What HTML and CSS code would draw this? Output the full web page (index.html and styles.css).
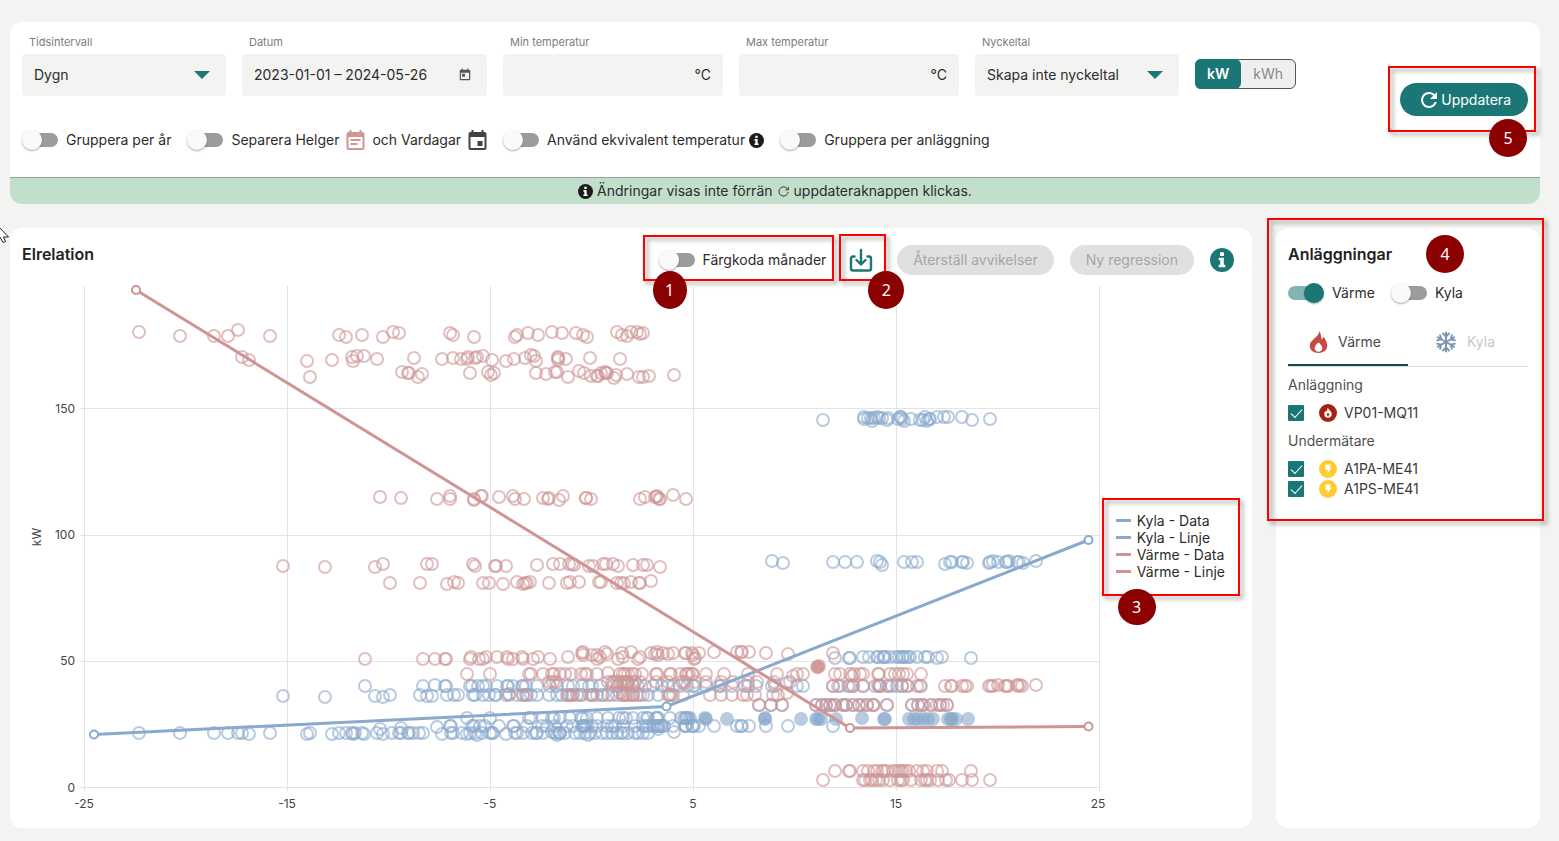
FILE: index.html
```html
<!DOCTYPE html>
<html lang="sv">
<head>
<meta charset="utf-8">
<title>Elrelation</title>
<link rel="stylesheet" href="styles.css">
</head>
<body>
<svg class="sprite" aria-hidden="true">
  <symbol id="i-info" viewBox="0 0 16 16"><circle cx="8" cy="8" r="8" fill="currentColor"/><path fill="#fff" d="M6.7 2.8h2.6v2.5H6.7zM5.8 6.5h3.4v4.6h1v1.7H5.8v-1.7h1V8.200h-1z"/></symbol>
  <symbol id="i-caret" viewBox="0 0 16 8"><path fill="currentColor" d="M0 0h16L8 8z"/></symbol>
  <symbol id="i-refresh" viewBox="0 0 24 24"><path fill="currentColor" d="M17.650 6.350A7.960 7.960 0 0 0 12 4a8 8 0 1 0 7.730 10h-2.080A6 6 0 1 1 12 6c1.660 0 3.140.690 4.220 1.780L13 11h7V4z"/></symbol>
  <symbol id="i-bolt" viewBox="0 0 18 18"><circle cx="9" cy="9" r="9" fill="#ffcb32"/><path fill="#fff" d="M6.500 4.500h5.200L10.700 7.600h1.900L8.400 13.800l.5-3.900H6.500z"/></symbol>
</svg>

<section class="panel filters">
  <div class="filters-body">
    <div class="filters-form">
      <div class="row fields">
        <div class="field w-select">
          <label for="interval">Tidsintervall</label>
          <div class="control"><select id="interval"><option>Dygn</option></select><svg class="caret"><use href="#i-caret"/></svg></div>
        </div>
        <div class="field w-date">
          <label for="date">Datum</label>
          <div class="control"><input id="date" type="text" value="2023-01-01 – 2024-05-26">
            <svg class="cal" viewBox="0 0 24 24"><path fill="currentColor" d="M19 3h-1V1h-2v2H8V1H6v2H5a2 2 0 0 0-2 2v14a2 2 0 0 0 2 2h14a2 2 0 0 0 2-2V5a2 2 0 0 0-2-2zm0 16H5V8h14zM7 10h5v5H7z"/></svg></div>
        </div>
        <div class="field w-temp">
          <label for="tmin">Min temperatur</label>
          <div class="control"><input id="tmin" type="text"><span class="unit">°C</span></div>
        </div>
        <div class="field w-temp">
          <label for="tmax">Max temperatur</label>
          <div class="control"><input id="tmax" type="text"><span class="unit">°C</span></div>
        </div>
        <div class="field w-select">
          <label for="key">Nyckeltal</label>
          <div class="control"><select id="key"><option>Skapa inte nyckeltal</option></select><svg class="caret"><use href="#i-caret"/></svg></div>
        </div>
        <div class="units"><button class="on" type="button">kW</button><button type="button">kWh</button></div>
      </div>
      <div class="row switches">
        <label class="switch"><input type="checkbox">Gruppera per år</label>
        <label class="switch"><input type="checkbox"><span class="inline">Separera Helger
          <svg class="day holiday" viewBox="3 1 18 20"><path fill="currentColor" d="M19 3h-1V1h-2v2H8V1H6v2H5a2 2 0 0 0-2 2v14a2 2 0 0 0 2 2h14a2 2 0 0 0 2-2V5a2 2 0 0 0-2-2zm0 16H5V8h14zM7 10h10v2H7zM7 14h7v2H7z"/></svg>
          och Vardagar
          <svg class="day" viewBox="3 1 18 20"><path fill="currentColor" d="M19 3h-1V1h-2v2H8V1H6v2H5a2 2 0 0 0-2 2v14a2 2 0 0 0 2 2h14a2 2 0 0 0 2-2V5a2 2 0 0 0-2-2zm0 16H5V8h14zM12 12h5v5h-5z"/></svg></span></label>
        <label class="switch"><input type="checkbox"><span class="inline tight">Använd ekvivalent temperatur <svg class="info"><use href="#i-info"/></svg></span></label>
        <label class="switch"><input type="checkbox">Gruppera per anläggning</label>
      </div>
    </div>
    <div class="marked mark-update">
      <button class="update" type="button"><svg><use href="#i-refresh"/></svg>Uppdatera</button>
      <span class="frame"></span><span class="badge">5</span>
    </div>
  </div>
  <div class="notice">
    <svg class="info"><use href="#i-info"/></svg><span>Ändringar visas inte förrän</span>
    <svg class="mini" viewBox="0 0 14 14" fill="none" stroke="currentColor"><path d="M12 7.500A5 5 0 1 1 10.800 3.700L12 5M12.200 2v3.200H9"/></svg><span>uppdateraknappen klickas.</span>
  </div>
</section>

<main class="columns">
  <section class="panel chart-card">
    <header class="chart-head">
      <h1>Elrelation</h1>
      <div class="tools">
        <div class="marked mark-months"><label class="switch"><input type="checkbox">Färgkoda månader</label><span class="frame"></span><span class="badge">1</span></div>
        <div class="marked mark-save">
          <button class="icon-btn" type="button" aria-label="Ladda ner"><svg viewBox="0 0 24 24" fill="none" stroke="currentColor" stroke-width="2.400" stroke-linecap="round" stroke-linejoin="round"><path d="M5.500 8.500H4a2 2 0 0 0-2 2V20.500a2 2 0 0 0 2 2h16a2 2 0 0 0 2-2V10.500a2 2 0 0 0-2-2h-1.500M12 2v14M7.500 12l4.500 4.500 4.500-4.500"/></svg></button>
          <span class="frame"></span><span class="badge">2</span>
        </div>
        <button class="pill" type="button" disabled>Återställ avvikelser</button>
        <button class="pill" type="button" disabled>Ny regression</button>
        <button class="icon-btn help" type="button" aria-label="Information"><svg><use href="#i-info"/></svg></button>
      </div>
    </header>
    <div class="chart">
      <svg id="plot" viewBox="10 286 1242 542" role="img" aria-label="Elrelation, kW">
        <path class="grid" d="M84.500 286v505M287.500 286v505M490.500 286v505M693.500 286v505M896.500 286v505M1099.500 286v505M80 408.500h1020M80 535.500h1020M80 661.500h1020M80 787.500h1020"/>
        <g class="axis end"><text x="75" y="413">150</text><text x="75" y="539">100</text><text x="75" y="665">50</text><text x="75" y="792">0</text></g>
        <g class="axis mid"><text x="84" y="808">-25</text><text x="287" y="808">-15</text><text x="490" y="808">-5</text><text x="693" y="808">5</text><text x="896" y="808">15</text><text x="1098" y="808">25</text><text transform="translate(41 537) rotate(-90)">kW</text></g>
        <g id="dots"></g>
        <g class="trend cool"><path d="M94 734.500 666.500 706.500 1088.500 540"/><circle cx="94" cy="734.500" r="4"/><circle cx="666.500" cy="706.500" r="4"/><circle cx="1088.500" cy="540" r="4"/></g>
        <g class="trend heat"><path d="M136 290 850 728 1088.500 726.500"/><circle cx="136" cy="290" r="4"/><circle cx="850" cy="728" r="4"/><circle cx="1088.500" cy="726.500" r="4"/></g>
      </svg>
      <div class="marked mark-legend">
        <ul class="legend"><li class="cool">Kyla - Data</li><li class="cool">Kyla - Linje</li><li class="heat">Värme - Data</li><li class="heat">Värme - Linje</li></ul>
        <span class="frame"></span><span class="badge">3</span>
      </div>
    </div>
  </section>

  <aside class="panel side marked mark-side">
    <h2>Anläggningar</h2>
    <div class="side-switches">
      <label class="switch"><input type="checkbox" checked>Värme</label>
      <label class="switch"><input type="checkbox">Kyla</label>
    </div>
    <div class="tabs">
      <button class="tab active" type="button"><svg class="flame" viewBox="0 0 20 24"><path fill="#c64a3f" d="M10.500.500c.3 1.600-.3 3-1.600 4.700C6 8.500.800 11.500.800 16.200c0 4.300 3.900 7.300 9.100 7.300s9.300-3 9.300-7.300c0-4.300-2.200-7-3.700-9.700-.5 1.200-1.300 2-2.400 2.300C12.600 6 12.700 3 10.500.500z"/><path fill="#fff" d="M10 12.500c2.300 1.600 4 3.900 4 6 0 2.300-1.700 3.700-4 3.700s-4-1.400-4-3.700c0-2.100 1.700-4.400 4-6z"/></svg>Värme</button>
      <button class="tab" type="button"><svg class="snow" viewBox="0 0 22 22" fill="none" stroke="#7d96b8" stroke-width="2" stroke-linecap="round"><g id="arm"><path d="M11 11V1.500M8 2.500l3 3 3-3"/></g><use href="#arm" transform="rotate(60 11 11)"/><use href="#arm" transform="rotate(120 11 11)"/><use href="#arm" transform="rotate(180 11 11)"/><use href="#arm" transform="rotate(240 11 11)"/><use href="#arm" transform="rotate(300 11 11)"/></svg>Kyla</button>
    </div>
    <h3>Anläggning</h3>
    <label class="meter"><input type="checkbox" checked><svg viewBox="0 0 18 18"><circle cx="9" cy="9" r="9" fill="#a82015"/><path fill="#fff" d="M9 3.800c.3 2 3.700 3.400 3.700 6.200a3.600 3.600 0 0 1-7.400 0c0-1.500 1-2.500 1.700-3.200.3.500.5.800.9.900C7.900 6.300 8 5 9 3.800z"/><circle cx="9" cy="10.600" r="1.300" fill="#a82015"/></svg>VP01-MQ11</label>
    <h3>Undermätare</h3>
    <label class="meter"><input type="checkbox" checked><svg><use href="#i-bolt"/></svg>A1PA-ME41</label>
    <label class="meter"><input type="checkbox" checked><svg><use href="#i-bolt"/></svg>A1PS-ME41</label>
    <span class="frame"></span><span class="badge">4</span>
  </aside>
</main>
<svg class="pointer" viewBox="0 0 10 18" aria-hidden="true"><path fill="#fff" stroke="#222" d="M-3-1V14l3-3 3 5.500 2.500-1L3.500 11H8.500z"/></svg>
<script src="chart.js"></script>
</body>
</html>
```
FILE: styles.css
```css
* { box-sizing: border-box; }
body {
  margin: 0;
  padding: 22px 19px 13px 10px;
  background: #f3f3f1;
  color: #2c2c2c;
  font: 400 14px/20px Inter, "Liberation Sans", sans-serif;
}
button, input, select { font: inherit; color: inherit; margin: 0; }
button { cursor: pointer; }
h1, h2, h3 { margin: 0; }
.sprite { position: absolute; width: 0; height: 0; }
.panel { background: #fff; border-radius: 12px; }

/* filter panel */
.filters-body { display: flex; justify-content: space-between; align-items: center; min-height: 155px; padding: 12px; }
.filters-form { align-self: flex-start; display: flex; flex-direction: column; gap: 34px; }
.row { display: flex; gap: 16px; }
.fields { align-items: flex-end; }
.field { display: flex; flex-direction: column; gap: 3px; }
.field label { padding-left: 7px; font-size: 11px; line-height: 17px; color: #7c7c7c; }
.w-select { width: 204px; }
.w-date { width: 245px; }
.w-temp { width: 220px; }
.control { display: flex; align-items: center; height: 42px; padding: 0 12px; background: #f3f3f1; border-radius: 4px; }
.control select, .control input { flex: 1; min-width: 0; padding: 0; border: 0; background: none; appearance: none; outline: 0; }
.caret { width: 16px; height: 8px; margin-right: 4px; color: #1b7776; }
.cal { width: 14px; height: 14px; margin-right: 3px; color: #555; }
.units { display: flex; height: 30px; margin-bottom: 7px; border: 1px solid #555; border-radius: 6px; background: #efefef; }
.units button { padding: 0 12px; border: 0; background: none; color: #888; }
.units .on { margin: -1px 0 -1px -1px; border-radius: 6px; background: #1b7776; color: #fff; font-weight: 600; }

/* switches */
.switch { display: inline-flex; align-items: center; gap: 8px; white-space: nowrap; }
.switch input { position: relative; flex: none; appearance: none; width: 36px; height: 20px; }
.switch input::before { content: ""; position: absolute; inset: 3px 0 3px 2px; border-radius: 7px; background: #9c9c9c; }
.switch input::after { content: ""; position: absolute; left: 0; top: 0; width: 20px; height: 20px; border-radius: 50%; background: #fafafa; box-shadow: 0 1px 2px rgba(0, 0, 0, .35); }
.switch input:checked::before { background: #83b3b3; inset: 3px 2px 3px 0; }
.switch input:checked::after { left: auto; right: 0; background: #1b7776; }
.inline { display: inline-flex; align-items: center; gap: 7px; }
.inline.tight { gap: 4px; }
.info { width: 15px; height: 15px; flex: none; color: #1c1c1c; }
.day { width: 19px; height: 20px; color: #424242; }
.day.holiday { color: #d09696; }

.update { display: flex; align-items: center; height: 33px; padding: 0 17px; border: 0; border-radius: 17px; background: #1b7776; color: #fff; }
.update svg { width: 24px; height: 24px; }
.notice { display: flex; justify-content: center; align-items: center; gap: 4px; height: 27px; border-top: 1px solid #93a29a; border-radius: 0 0 12px 12px; background: #c1dfcb; }
.mini { width: 13px; height: 13px; }

/* chart card */
.columns { display: flex; gap: 24px; margin-top: 24px; }
.chart-card { flex: 1; min-width: 0; }
.chart-head { display: flex; justify-content: space-between; height: 58px; padding: 16px 18px 0 12px; }
h1, h2 { font-size: 16px; line-height: 20px; font-weight: 600; color: #212121; }
.tools { display: flex; align-items: center; gap: 16px; height: 32px; }
.mark-months { display: flex; }
.mark-save { margin: 0 8px 0 7px; }
.icon-btn { display: block; width: 24px; height: 24px; padding: 0; border: 0; background: none; color: #1b7776; }
.icon-btn svg { display: block; width: 24px; height: 24px; }
.pill { height: 30px; padding: 0 16px; border: 0; border-radius: 15px; background: #e0e0e0; color: #a6a6a6; white-space: nowrap; }
.chart { position: relative; }
.chart > svg { display: block; width: 100%; overflow: visible; border-radius: 12px; }
.grid { fill: none; stroke: #e4e4e4; }
.axis { font-size: 12px; fill: #444; }
.end { text-anchor: end; }
.mid { text-anchor: middle; }
.cool { --tone: #89a9cd; }
.heat { --tone: #cf9494; }
.dot { fill: none; stroke: var(--tone); stroke-width: 2; opacity: .6; }
.dot.solid { fill: var(--tone); }
.trend { fill: #fff; stroke: var(--tone); stroke-width: 2; }
.trend path { fill: none; stroke-width: 3; }
.legend { margin: 0; padding: 0; list-style: none; line-height: 17px; }
.legend li { display: flex; align-items: center; gap: 6px; white-space: nowrap; }
.legend li::before { content: ""; width: 15px; height: 3px; background: var(--tone); }

/* side panel */
.side { width: 264px; padding: 16px 12px; }
.side-switches { display: flex; gap: 16px; margin-top: 19px; }
.tabs { display: flex; height: 49px; margin: 15px 0 8px; border-bottom: 1px solid #ddd; }
.tab { flex: 1; display: flex; align-items: center; justify-content: center; gap: 10px; padding: 0 6px 0 0; border: 0; background: none; color: #c8c8c8; }
.tab.active { box-shadow: inset 0 -2px #154a4b; color: #4a4a4a; }
.flame { width: 19px; height: 24px; }
.snow { width: 22px; height: 22px; }
h3 { font-size: 14px; line-height: 20px; font-weight: 400; color: #505050; }
.meter { display: flex; align-items: center; height: 20px; color: #3a3a3a; }
h3 + .meter { margin-top: 8px; }
.meter + h3 { margin-top: 8px; }
.meter svg { width: 18px; height: 18px; margin: 0 7px 0 15px; }
.meter input { appearance: none; width: 16px; height: 16px; border-radius: 1px; background: #1b7776; display: grid; place-items: center; }
.meter input::before { content: ""; width: 10px; height: 5px; margin-bottom: 3px; border: solid #fff; border-width: 0 0 1px 1px; rotate: -48deg; }

/* numbered callouts */
.marked { position: relative; }
.frame { position: absolute; border: 2px solid #f00; filter: drop-shadow(3px 3px 2px rgba(0, 0, 0, .4)); pointer-events: none; }
.badge { position: absolute; z-index: 1; display: grid; place-items: center; width: 38px; height: 38px; border-radius: 50%; background: #8b0000; color: #fff; font: 16px/20px "Noto Sans", sans-serif; }
.mark-update .frame { inset: -17px -8px -16px -12px; }
.mark-update .badge { right: 1px; top: 36px; }
.mark-months .frame { inset: -15px -8px -11px -16px; }
.mark-months .badge { left: -6px; top: 21px; width: 34px; }
.mark-save .frame { inset: -14px -13px -9px -10px; }
.mark-save .badge { left: 19px; top: 23px; width: 36px; }
.mark-legend { position: absolute; right: 12px; top: 212px; padding: 14px 15px 16px 14px; }
.mark-legend .frame { inset: 0; }
.mark-legend .badge { left: 16px; bottom: -29px; height: 36px; }
.mark-side .frame { inset: -10px -4px auto -9px; height: 303px; }
.mark-side .badge { left: 150px; top: 7px; }
.pointer { position: absolute; left: 0; top: 226px; width: 10px; height: 18px; }
```
FILE: chart.js
```javascript
// Measurements in plot units. Each row is "y: x x x …"; an x may carry its own y as x,y.
const series = [
  { tone: 'cool', rows: [
    '418: 823,420 864,417 864,419 868 871 872,421 874 877,417 879 882 887,420 888 898,419 900,417 901,417 902,419 904,421 911,419 920,420 923,420 925,417 927,421 929,419 930,419 937,417 944,417 948,417 962,417 972,420 990,419',
    '562: 772,561 783,563 833 845 857 877,561 880 882,565 904 912 917 945,564 950 952 962 963 967,563 989,563 990 993,561 998 1006 1007 1009,561 1017 1019 1023,563 1036,561',
    '657: 835,658 849,658 850,658 863 869 877 878 883 884 885 890 896 899 902 903 905 908 910 917 925 928 937,658 942 971,658',
    '686: 365 423 435,685 445 446 470 472 478 483 486 497 507 508 513 522 523 526 537 550 557 568 573 582 589 592 600 613 618 627 633 638 645 653 662 668 673 680 687 693 695 706 719 721 732 745 748 756 772 775 787,683 797 803 833 840 848 853 863 875 880 887 892 897 902 907 921',
    '695: 283,696 325,697 375,696 383,697 390 420 427,696 432,696 447 454 458 473 475 483 489 495 496 506 509 517 523 527 531 537 549 557 562 568 572 577 582 592 597 603 608 617 623 633 640 648 658 670',
    '705: 759 771 782 816 822 826 830 835 843 846 853 859 867 873 887 912 918 922 931 940 947',
    '718: 467 490 529 531 543 552 554 560 570 581 583 587 597 608 619 623 626 633 643 647 648 656 657 658 670 681 684 686 688 686',
    '726: 380,729 401,728 437,727 450 451 472 474 480 485 499 513 514 527 542 547 555 567 573 582 583 584 585 587 592 597 607 612 615 623 635 643 646 649 653 655 657 658 659 661 662 664 673 685 686 686 693 692 694 699 714 737 741 742 749 766 788 833',
    '733: 139 180 214 228 238 242 249,734 270 307,734 310 332,734 339 346 352 353,734 355 362 364,734 377 383,734 392 399 401 408 409 413 419 423 442,734 451 453 462 467,734 470 475 477,735 482 490 492 493 506,734 515 517 523 532 536 537 543 552,732 555 557,735 559 560 560 565 575 580 585 588,735 590 595 602 607 612 617 621 623 628 635 638 643 648 658,729 674,732'
  ], solid: '719: 690,718 705,718 706 727 765,718 765 801 816 818 821 836 862,718 884 885 909 914 918 923 928 933 948 951 952 956 968' },
  { tone: 'heat', rows: [
    '335: 139,332 180,336 214,336 228,336 238,330 270,336 339 346,337 362 383,337 393,332 399,333 450,333 453 474,337 515,337 517 528,333 538 552,332 562,333 576,333 583 587,337 617,332 622 627,336 631,332 637,332 640,334 643,333',
    '358: 242,357 249,360 307,361 332,360 352,357 357,356 353,361 364,356 377,359 414 442,359 453 461,359 467,359 468,357 475 477,357 483,356 492,360 506,361 514,359 525 531,355 534,356 536,361 558,357 558,360 558 566,359 590 620,359',
    '373: 310,377 402,372 408 409 418,377 422,374 470 488,372 491,375 494 536 546,374 555,372 557,372 568,377 579,371 584 591,376 597,376 598,376 601 605,372 607 606 614,378 616,375 627,374 639,377 643,377 649,376 674,375',
    '498: 380,497 401 437,499 450,496 450,499 474,499 474,500 481,496 482,496 499,497 513,496 515,499 524,499 543 548,499 549 559,500 563,496 586 586 591,499 640,499 645,497 655,497 657,496 657,497 659,499 660,499 673,495 686,499',
    '566: 283 325,567 375,567 383,564 427,564 432,564 473,564 475 495 496 506 537,565 553,564 560,564 569,564 572,564 574,565 589 593 603,564 606,564 613,564 618 633,565 643,565 647,565 660,567',
    '583: 390 420 447,584 454,582 458 483 489 503,584 517,582 523,584 525 527 530,582 549 567 570,582 579,582 599,582 601,582 617 621 624 631,582 639 640 651,581',
    '657: 365,659 423,659 435,659 445,659 446,659 470,659 471 479,659 483,659 486 497 507 508,659 513,659 522 523,659 533,659 538 550,659 568 582,653 583,652 583,655 592,655 597,655 597,659 600 605,652 607,654 618,659 622,653 623 631,652 638,659 640 651,653 655,654 657,652 658,655 663,653 668,654 673,653 685,653 686,653 693,655 694,659 692,653 695,658 699,653 714,652 737,652 741,652 742,652 749,652 766,653 788,654 833,653',
    '674: 467 490 529 531 543 552 554 560 565 571 581 585 587 597 608,673 620 623 625 628 632 635 642 656 657 670 671 680 686 687 692 689 693 706 724 748 777 793,676 797 803 835 840 850 852,676 854 860 863 878 879 890 895 899 903 907 921',
    '682: 549 553 556 608 612 614 617 620 622 625 627 628 632 635 640 656 668 682 685 695 706 721 733 748 757 774 790',
    '686: 833 838 850 853 863 878,685 879 880 889 902 908 917 920 945 951 952 962 965 967 989 991 993 998,685 1005 1007 1008 1017,685 1018 1020,685 1022 1036,685',
    '695: 509,694 523 526 567 570 573 580 590 593 602 612 620,693 623 625 627 630 633 637 643 668 670 673 683 710 721 732 743 747 755 773 778 787,693',
    '705: 759 771 782 816 822 826 830 833 835 843 846 853 859 862 867 873 874 887 912 918 922 924 931 937 940 943 947',
    '771: 835 849 850 863 868 874 877 882 884 887 893 896 899 901 903 906 909 917 923 927 937 942 971',
    '780: 823 863 865 870 872 876 879 883 890 898 901 903 911 921 925 927 930 938 946 949 962 972 990'
  ], solid: '667: 817 818 819,666' }
];

const layer = document.getElementById('dots');

function drawRow(row, classes) {
  const [base, items] = row.split(': ');
  for (const item of items.split(' ')) {
    const [x, y = base] = item.split(',');
    const dot = document.createElementNS('http://www.w3.org/2000/svg', 'circle');
    dot.setAttribute('class', classes);
    dot.setAttribute('cx', x);
    dot.setAttribute('cy', y);
    dot.setAttribute('r', 6);
    layer.append(dot);
  }
}

for (const { tone, rows, solid } of series) {
  rows.forEach(row => drawRow(row, `dot ${tone}`));
  drawRow(solid, `dot solid ${tone}`);
}
```
